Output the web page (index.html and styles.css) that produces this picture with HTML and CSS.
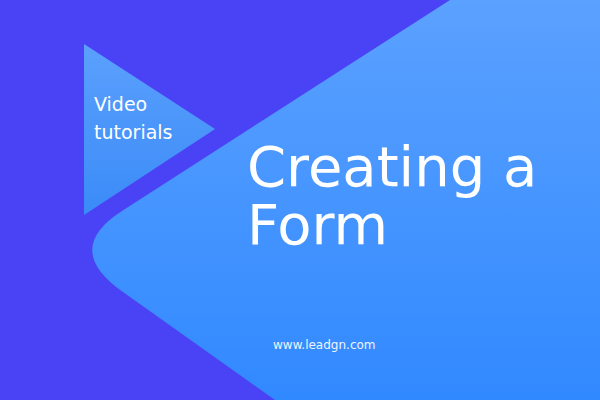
FILE: index.html
```html
<!DOCTYPE html>
<html>
<head>
<meta charset="utf-8">
<link rel="stylesheet" href="styles.css">
</head>
<body>
<div class="canvas">
  <svg class="bg" width="600" height="400" viewBox="0 0 600 400" aria-hidden="true">
    <defs>
      <linearGradient id="big" x1="0" y1="0" x2="0" y2="1">
        <stop offset="0" stop-color="#5ba1ff"/>
        <stop offset="1" stop-color="#3189ff"/>
      </linearGradient>
      <linearGradient id="tri" x1="0" y1="0" x2="0" y2="1">
        <stop offset="0" stop-color="#5ba0fd"/>
        <stop offset="1" stop-color="#3a8bf8"/>
      </linearGradient>
    </defs>
    <path d="M84 44 L215 129 L84 215 Z" fill="url(#tri)"/>
    <path d="M450 0 L600 0 L600 400 L275 400 L122 291.3 Q62.5 249 122 210.9 Z" fill="url(#big)"/>
  </svg>
  <div class="content">
    <div class="label">Video<br>tutorials</div>
    <h1 class="title">Creating a<br>Form</h1>
    <div class="url">www.leadgn.com</div>
  </div>
</div>
</body>
</html>
```
FILE: styles.css
```css
html, body {
  margin: 0;
  padding: 0;
}
body {
  background: #4a43f6;
  font-family: "DejaVu Sans", "Inter", sans-serif;
}
.canvas {
  position: relative;
  width: 600px;
  height: 400px;
  overflow: hidden;
  background: #4a43f6;
}
.bg {
  position: absolute;
  left: 0;
  top: 0;
}
.content {
  position: relative;
  display: flex;
  flex-direction: column;
  color: #fff;
}
.label {
  margin: 90px 0 0 94px;
  font-size: 19px;
  line-height: 28px;
}
.title {
  margin: -8px 0 0 247px;
  font-size: 56px;
  font-weight: 400;
  line-height: 58px;
}
.url {
  margin: 84px 0 0 273px;
  font-size: 12px;
  line-height: 14px;
  color: #eef4ff;
  letter-spacing: 0;
}
```
